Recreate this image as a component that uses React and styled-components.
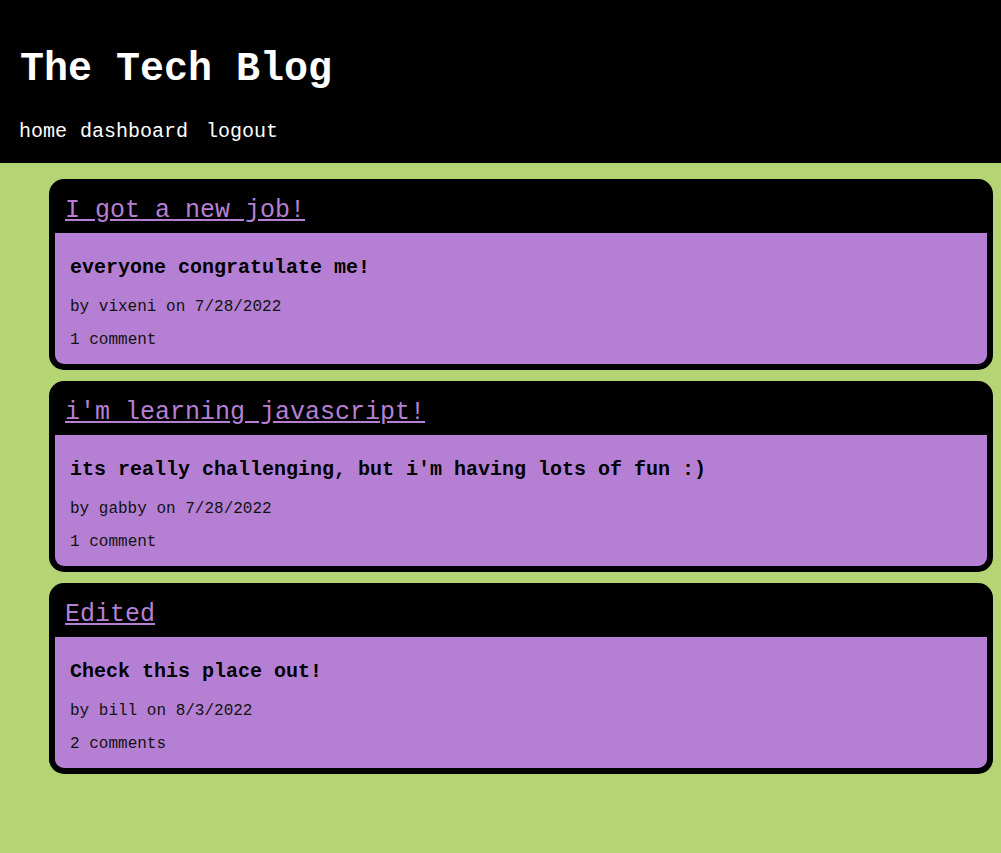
import React from "react";
import styled, { createGlobalStyle } from "styled-components";

const GlobalStyle = createGlobalStyle`
  html, body {
    margin: 0;
    padding: 0;
  }
  body {
    background-color: #b5d574;
    font-family: "Liberation Mono", "Courier New", monospace;
    min-height: 100vh;
  }
`;

const Header = styled.header`
  background-color: #000;
  color: #fff;
  padding: 47px 19px 19px 19px;
`;

const Title = styled.h1`
  margin: 0 0 27px 1px;
  font-size: 40px;
  line-height: 46px;
  font-weight: bold;
`;

const Nav = styled.nav`
  display: flex;
  font-size: 20px;
  line-height: 24px;
`;

const NavLink = styled.a`
  color: #fff;
  text-decoration: none;
  margin-left: ${({ $gap }) => $gap || 0}px;
`;

const Main = styled.main`
  display: flex;
  flex-direction: column;
  gap: 11px;
  padding: 16px 8px 40px 49px;
`;

const Card = styled.article`
  background-color: #000;
  border-radius: 15px;
  padding: 0 6px 6px 6px;
`;

const CardHeader = styled.div`
  padding: 17px 10px 8px 10px;
`;

const CardTitle = styled.a`
  color: #b580d4;
  font-size: 25px;
  line-height: 29px;
  text-decoration: underline;
  display: inline-block;
`;

const CardBody = styled.div`
  background-color: #b580d4;
  border-radius: 0 0 9px 9px;
  padding: 23px 15px 14px 15px;
  display: flex;
  flex-direction: column;
`;

const Content = styled.p`
  margin: 0 0 18px 0;
  font-size: 20px;
  line-height: 24px;
  font-weight: bold;
  color: #000;
`;

const Meta = styled.p`
  margin: 0 0 ${({ $last }) => ($last ? 0 : 14)}px 0;
  font-size: 16px;
  line-height: 19px;
  color: #111;
`;

const posts = [
  {
    title: "I got a new job!",
    body: "everyone congratulate me!",
    author: "vixeni",
    date: "7/28/2022",
    comments: 1,
  },
  {
    title: "i'm learning javascript!",
    body: "its really challenging, but i'm having lots of fun :)",
    author: "gabby",
    date: "7/28/2022",
    comments: 1,
  },
  {
    title: "Edited",
    body: "Check this place out!",
    author: "bill",
    date: "8/3/2022",
    comments: 2,
  },
];

const App = () => {
  return (
    <>
      <GlobalStyle />
      <Header>
        <Title>The Tech Blog</Title>
        <Nav>
          <NavLink href="#">home</NavLink>
          <NavLink href="#" $gap={13}>
            dashboard
          </NavLink>
          <NavLink href="#" $gap={18}>
            logout
          </NavLink>
        </Nav>
      </Header>
      <Main>
        {posts.map((post) => (
          <Card key={post.title}>
            <CardHeader>
              <CardTitle href="#">{post.title}</CardTitle>
            </CardHeader>
            <CardBody>
              <Content>{post.body}</Content>
              <Meta>
                by {post.author} on {post.date}
              </Meta>
              <Meta $last>
                {post.comments} {post.comments === 1 ? "comment" : "comments"}
              </Meta>
            </CardBody>
          </Card>
        ))}
      </Main>
    </>
  );
};

export default App;
